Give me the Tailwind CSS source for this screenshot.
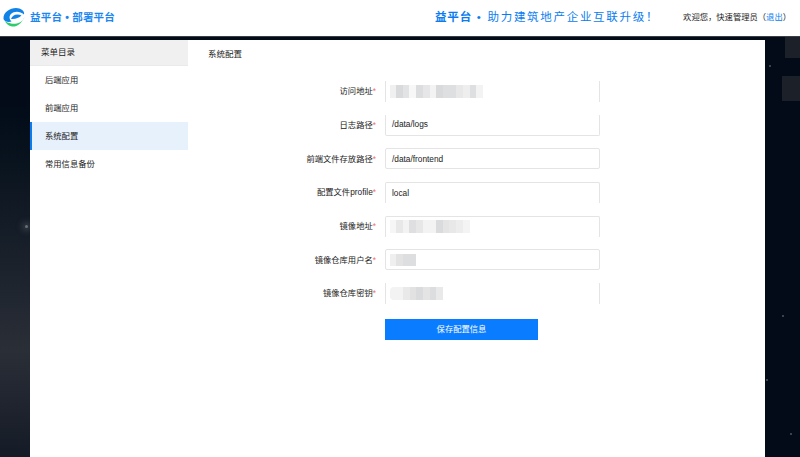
<!DOCTYPE html>
<html lang="zh-CN">
<head>
    <meta charset="UTF-8">
    <title>部署平台 - 系统配置</title>
    <script src="https://cdn.jsdelivr.net/npm/@tailwindcss/browser@4"></script>
</head>
<body class="relative h-[457px] w-[800px] overflow-hidden bg-[#020b17] font-['Liberation_Sans','Noto_Sans_CJK_SC',sans-serif] text-[8.3px] text-[#222]">
    <!-- Background -->
    <div class="absolute left-0 top-[100px] h-[357px] w-[30px] bg-gradient-to-b from-[#020b17] via-[#2a2e37] via-70% to-[#151b26]"></div>
    <div class="absolute left-[25px] top-[225px] h-[3px] w-[3px] rounded-full bg-[#6a6e76] shadow-[0_0_6px_3px_rgba(120,125,135,0.35)]"></div>
    <div class="absolute left-[785px] top-[37px] h-[21px] w-[15px] bg-[#1c2029]"></div>
    <div class="absolute left-[782px] top-[76px] h-[25px] w-[18px] bg-[#1c2029]"></div>
    <div class="absolute left-[769px] top-[65px] h-[2px] w-[2px] bg-[#3c424c]"></div>
    <div class="absolute left-[782px] top-[315px] h-[2px] w-[2px] bg-[#3c424c]"></div>
    <div class="absolute left-[766px] top-[379px] h-[2px] w-[2px] bg-[#3c424c]"></div>
    <div class="absolute left-[790px] top-[433px] h-[2px] w-[2px] bg-[#3c424c]"></div>

    <!-- Header -->
    <header class="relative flex h-[37px] items-center justify-between border-b border-[#3a3f47] bg-white pb-[1px] pl-[3px] pr-[9px]">
        <div class="flex items-center">
            <svg class="h-[20px] w-[22px]" viewBox="0 0 22 20">
                <path d="M2 13C5 20 16 22 21.500 9C20 15 12 16.500 8 15.500C6 15 4 14.500 2 13z" fill="#2ecb6f"/>
                <path d="M.5 11C0 4 7 0 13 0C18 0 22 3 21 6.500C17 3 11 3 8 6C6 8 6 11 8.500 13.500C5 14.500 1.500 13.500 .5 11z" fill="#1183e6"/>
                <path d="M8 11C9 7 14 5 18.500 7.500C16 10 12 11.500 8 11z" fill="#1183e6"/>
            </svg>
            <span class="ml-[5px] text-[10.500px] font-bold tracking-[0.2px] text-[#1a86f0]">益平台 • 部署平台</span>
        </div>
        <div class="flex items-center">
            <span class="text-[11.500px] tracking-[1.700px] text-[#0a7cf0]"><b class="tracking-[0.800px]">益平台</b> • 助力建筑地产企业互联升级！</span>
            <span class="ml-[24px]">欢迎您，快速管理员（<a class="text-[#0a7cf0]">退出</a>）</span>
        </div>
    </header>

    <!-- Main panel -->
    <main class="relative ml-[30px] mt-[3px] flex h-[417px] w-[735px] bg-white">
        <aside class="w-[158px] shrink-0">
            <div class="flex h-[26px] items-center border-b border-[#eaeaea] bg-[#f0f0f0] pl-[11px] text-[8.500px]">菜单目录</div>
            <ul>
                <li class="flex h-[28px] items-center pl-[15px]">后端应用</li>
                <li class="flex h-[28px] items-center pl-[15px]">前端应用</li>
                <li class="flex h-[28px] items-center border-l-2 border-[#0a7cf0] bg-[#e7f1fc] pl-[13px]">系统配置</li>
                <li class="flex h-[28px] items-center pl-[15px]">常用信息备份</li>
            </ul>
        </aside>
        <section class="flex-1">
            <h2 class="ml-[20px] mt-[8px] text-[8.500px] font-normal leading-[12px]">系统配置</h2>
            <form class="mt-[21px] flex flex-col gap-[12.700px]">
                <div class="flex h-[21px] items-center">
                    <label class="w-[188px] text-right">访问地址<span class="text-[#f56c6c]">*</span></label>
                    <div class="ml-[9px] flex h-full w-[215px] items-center border-x border-[#e4e4e4] pl-[4px]">
                        <div class="flex h-[13px] w-[93px]">
                            <i class="w-[6px] bg-[#f0f0f1]"></i><i class="w-[7px] bg-[#d9dadc]"></i><i class="w-[6px] bg-[#e2e3e4]"></i><i class="w-[7px] bg-[#f7f7f7]"></i><i class="w-[7px] bg-[#dcdddf]"></i><i class="w-[7px] bg-[#e6e6e8]"></i><i class="w-[6px] bg-[#f3f3f3]"></i><i class="w-[7px] bg-[#d9dadc]"></i><i class="w-[13px] bg-[#dedfe0]"></i><i class="w-[7px] bg-[#e8e8e9]"></i><i class="w-[7px] bg-[#eeeeef]"></i><i class="w-[6px] bg-[#dedfe1]"></i><i class="w-[7px] bg-[#f3f3f4]"></i>
                        </div>
                    </div>
                </div>
                <div class="flex h-[21px] items-center">
                    <label class="w-[188px] text-right">日志路径<span class="text-[#f56c6c]">*</span></label>
                    <div class="ml-[9px] flex h-full w-[215px] items-center rounded-b-[2px] border-x border-b border-[#e4e4e4] pl-[6px]">/data/logs</div>
                </div>
                <div class="flex h-[21px] items-center">
                    <label class="w-[188px] text-right">前端文件存放路径<span class="text-[#f56c6c]">*</span></label>
                    <div class="ml-[9px] flex h-full w-[215px] items-center rounded-[2px] border border-[#e4e4e4] pl-[6px]">/data/frontend</div>
                </div>
                <div class="flex h-[21px] items-center">
                    <label class="w-[188px] text-right">配置文件profile<span class="text-[#f56c6c]">*</span></label>
                    <div class="ml-[9px] flex h-full w-[215px] items-center rounded-t-[2px] border-x border-t border-[#e4e4e4] pl-[6px]">local</div>
                </div>
                <div class="flex h-[21px] items-center">
                    <label class="w-[188px] text-right">镜像地址<span class="text-[#f56c6c]">*</span></label>
                    <div class="ml-[9px] flex h-full w-[215px] items-center rounded-t-[2px] border-x border-t border-[#e4e4e4] pl-[4px]">
                        <div class="flex h-[13px] w-[80px]">
                            <i class="w-[6px] bg-[#f6f6f6]"></i><i class="w-[7px] bg-[#e8e8e9]"></i><i class="w-[6px] bg-[#f3f3f3]"></i><i class="w-[7px] bg-[#dfdfe1]"></i><i class="w-[7px] bg-[#e7e7e8]"></i><i class="w-[13px] bg-[#f3f3f3]"></i><i class="w-[7px] bg-[#dadbdc]"></i><i class="w-[6px] bg-[#e4e4e5]"></i><i class="w-[7px] bg-[#e8e8e9]"></i><i class="w-[7px] bg-[#ededee]"></i><i class="w-[7px] bg-[#f4f4f4]"></i>
                        </div>
                    </div>
                </div>
                <div class="flex h-[21px] items-center">
                    <label class="w-[188px] text-right">镜像仓库用户名<span class="text-[#f56c6c]">*</span></label>
                    <div class="ml-[9px] flex h-full w-[215px] items-center rounded-[2px] border border-[#e4e4e4] pl-[4px]">
                        <div class="flex h-[12px] w-[26px]">
                            <i class="w-[6px] bg-[#efeff0]"></i><i class="w-[7px] bg-[#e3e3e4]"></i><i class="w-[13px] bg-[#dddedf]"></i>
                        </div>
                    </div>
                </div>
                <div class="flex h-[21px] items-center">
                    <label class="w-[188px] text-right">镜像仓库密钥<span class="text-[#f56c6c]">*</span></label>
                    <div class="ml-[9px] flex h-full w-[215px] items-center border-x border-[#e4e4e4] pl-[4px]">
                        <div class="flex h-[13px] w-[53px]">
                            <i class="w-[13px] rounded-l-[4px] bg-[#f3f3f4]"></i><i class="w-[7px] bg-[#e9e9ea]"></i><i class="w-[6px] bg-[#e2e2e3]"></i><i class="w-[7px] bg-[#dadbdc]"></i><i class="w-[7px] bg-[#e4e4e5]"></i><i class="w-[6px] bg-[#dcdddf]"></i><i class="w-[7px] bg-[#e9e9ea]"></i>
                        </div>
                    </div>
                </div>
                <button type="button" class="ml-[197px] mt-[2px] h-[21px] w-[153px] bg-[#0a7cff] text-[8.300px] text-white">保存配置信息</button>
            </form>
        </section>
    </main>
</body>
</html>
